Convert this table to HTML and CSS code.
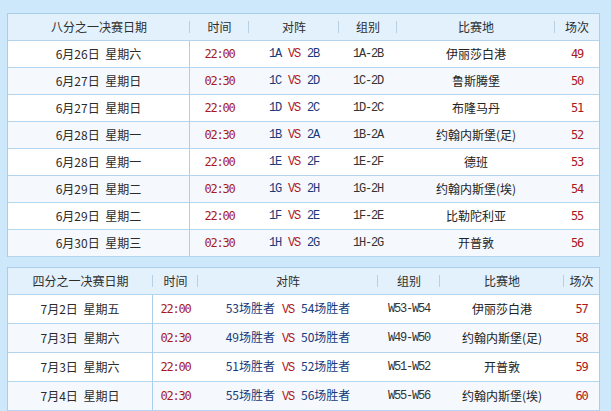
FILE: index.html
```html
<!DOCTYPE html>
<html lang="zh-CN">
<head>
<meta charset="utf-8">
<title>赛程</title>
<link rel="stylesheet" href="styles.css">
</head>
<body>
<div class="page">
  <table class="sched sched-r16">
    <thead>
      <tr>
        <th class="c-date">八分之一决赛日期</th>
        <th class="c-time">时间</th>
        <th class="c-match">对阵</th>
        <th class="c-group">组别</th>
        <th class="c-venue">比赛地</th>
        <th class="c-num">场次</th>
      </tr>
    </thead>
    <tbody>
      <tr><td class="date">6月26日 星期六</td><td class="time">22:00</td><td class="match"><span class="code">1A</span> <span class="vs">VS</span> <span class="code">2B</span></td><td class="grp">1A-2B</td><td class="venue">伊丽莎白港</td><td class="num">49</td></tr>
      <tr><td class="date">6月27日 星期日</td><td class="time">02:30</td><td class="match"><span class="code">1C</span> <span class="vs">VS</span> <span class="code">2D</span></td><td class="grp">1C-2D</td><td class="venue">鲁斯腾堡</td><td class="num">50</td></tr>
      <tr><td class="date">6月27日 星期日</td><td class="time">22:00</td><td class="match"><span class="code">1D</span> <span class="vs">VS</span> <span class="code">2C</span></td><td class="grp">1D-2C</td><td class="venue">布隆马丹</td><td class="num">51</td></tr>
      <tr><td class="date">6月28日 星期一</td><td class="time">02:30</td><td class="match"><span class="code">1B</span> <span class="vs">VS</span> <span class="code">2A</span></td><td class="grp">1B-2A</td><td class="venue">约翰内斯堡(足)</td><td class="num">52</td></tr>
      <tr><td class="date">6月28日 星期一</td><td class="time">22:00</td><td class="match"><span class="code">1E</span> <span class="vs">VS</span> <span class="code">2F</span></td><td class="grp">1E-2F</td><td class="venue">德班</td><td class="num">53</td></tr>
      <tr><td class="date">6月29日 星期二</td><td class="time">02:30</td><td class="match"><span class="code">1G</span> <span class="vs">VS</span> <span class="code">2H</span></td><td class="grp">1G-2H</td><td class="venue">约翰内斯堡(埃)</td><td class="num">54</td></tr>
      <tr><td class="date">6月29日 星期二</td><td class="time">22:00</td><td class="match"><span class="code">1F</span> <span class="vs">VS</span> <span class="code">2E</span></td><td class="grp">1F-2E</td><td class="venue">比勒陀利亚</td><td class="num">55</td></tr>
      <tr><td class="date">6月30日 星期三</td><td class="time">02:30</td><td class="match"><span class="code">1H</span> <span class="vs">VS</span> <span class="code">2G</span></td><td class="grp">1H-2G</td><td class="venue">开普敦</td><td class="num">56</td></tr>
    </tbody>
  </table>

  <table class="sched sched-qf">
    <thead>
      <tr>
        <th class="c-date">四分之一决赛日期</th>
        <th class="c-time">时间</th>
        <th class="c-match">对阵</th>
        <th class="c-group">组别</th>
        <th class="c-venue">比赛地</th>
        <th class="c-num">场次</th>
      </tr>
    </thead>
    <tbody>
      <tr><td class="date">7月2日 星期五</td><td class="time">22:00</td><td class="match"><span class="team">53场胜者</span> <span class="vs">VS</span> <span class="team">54场胜者</span></td><td class="grp">W53-W54</td><td class="venue">伊丽莎白港</td><td class="num">57</td></tr>
      <tr><td class="date">7月3日 星期六</td><td class="time">02:30</td><td class="match"><span class="team">49场胜者</span> <span class="vs">VS</span> <span class="team">50场胜者</span></td><td class="grp">W49-W50</td><td class="venue">约翰内斯堡(足)</td><td class="num">58</td></tr>
      <tr><td class="date">7月3日 星期六</td><td class="time">22:00</td><td class="match"><span class="team">51场胜者</span> <span class="vs">VS</span> <span class="team">52场胜者</span></td><td class="grp">W51-W52</td><td class="venue">开普敦</td><td class="num">59</td></tr>
      <tr><td class="date">7月4日 星期日</td><td class="time">02:30</td><td class="match"><span class="team">55场胜者</span> <span class="vs">VS</span> <span class="team">56场胜者</span></td><td class="grp">W55-W56</td><td class="venue">约翰内斯堡(埃)</td><td class="num">60</td></tr>
    </tbody>
  </table>
</div>
</body>
</html>
```

FILE: styles.css
```css
html, body {
  margin: 0;
  padding: 0;
  background: #cde8fb;
}

.page {
  padding: 13px 11px 0 7px;
  display: flex;
  flex-direction: column;
  gap: 10px;
}

.sched {
  width: 593px;
  table-layout: fixed;
  border-collapse: separate;
  border-spacing: 0;
  border: 1px solid #a9cdea;
  border-bottom: none;
  background: #ffffff;
  font-family: "Noto Sans CJK SC", "Noto Sans", sans-serif;
  font-size: 12px;
  color: #333333;
}

.sched th,
.sched td {
  box-sizing: border-box;
  padding: 0;
  line-height: 26px;
  text-align: center;
  white-space: nowrap;
  overflow: hidden;
  border-bottom: 1px solid #b4d5ee;
}

.sched th {
  font-weight: normal;
  color: #2e2e2e;
  background: linear-gradient(#b9cfe2, #b9cfe2) no-repeat right center / 1px 12px, #e3f1fc;
}

.sched th.c-num {
  background: #e3f1fc;
}

.sched tbody tr:nth-child(even) td {
  background: #f5f9fd;
}

.sched td.date {
  border-right: 1px solid #acd0ec;
  color: #2b2b2b;
  word-spacing: 3px;
}

/* column widths: eighth-finals */
.sched-r16 .c-date { width: 182px; }
.sched-r16 .c-time { width: 59px; }
.sched-r16 .c-match { width: 90px; }
.sched-r16 .c-group { width: 58px; }
.sched-r16 .c-venue { width: 158px; }
.sched-r16 .c-num { width: 44px; }

/* column widths: quarter-finals */
.sched-qf .c-date { width: 145px; }
.sched-qf .c-time { width: 45px; }
.sched-qf .c-match { width: 180px; }
.sched-qf .c-group { width: 62px; }
.sched-qf .c-venue { width: 124px; }
.sched-qf .c-num { width: 35px; }

.time,
.num {
  font-family: "DejaVu Sans Mono", "Liberation Mono", monospace;
  font-size: 12px;
  letter-spacing: -1.2px;
  color: #a8191c;
}

.match {
  font-family: "Liberation Mono", "DejaVu Sans Mono", monospace;
  font-size: 12px;
  letter-spacing: -1.2px;
  word-spacing: 1px;
}

.code {
  color: #173a7a;
}

.vs {
  color: #b0171b;
}

.team {
  font-family: "Noto Sans CJK SC", "Noto Sans", sans-serif;
  letter-spacing: 0;
  color: #173a7a;
}

.grp {
  font-family: "Liberation Mono", "DejaVu Sans Mono", monospace;
  font-size: 12px;
  letter-spacing: -1.2px;
  color: #333333;
}

.venue {
  color: #222222;
}
```
